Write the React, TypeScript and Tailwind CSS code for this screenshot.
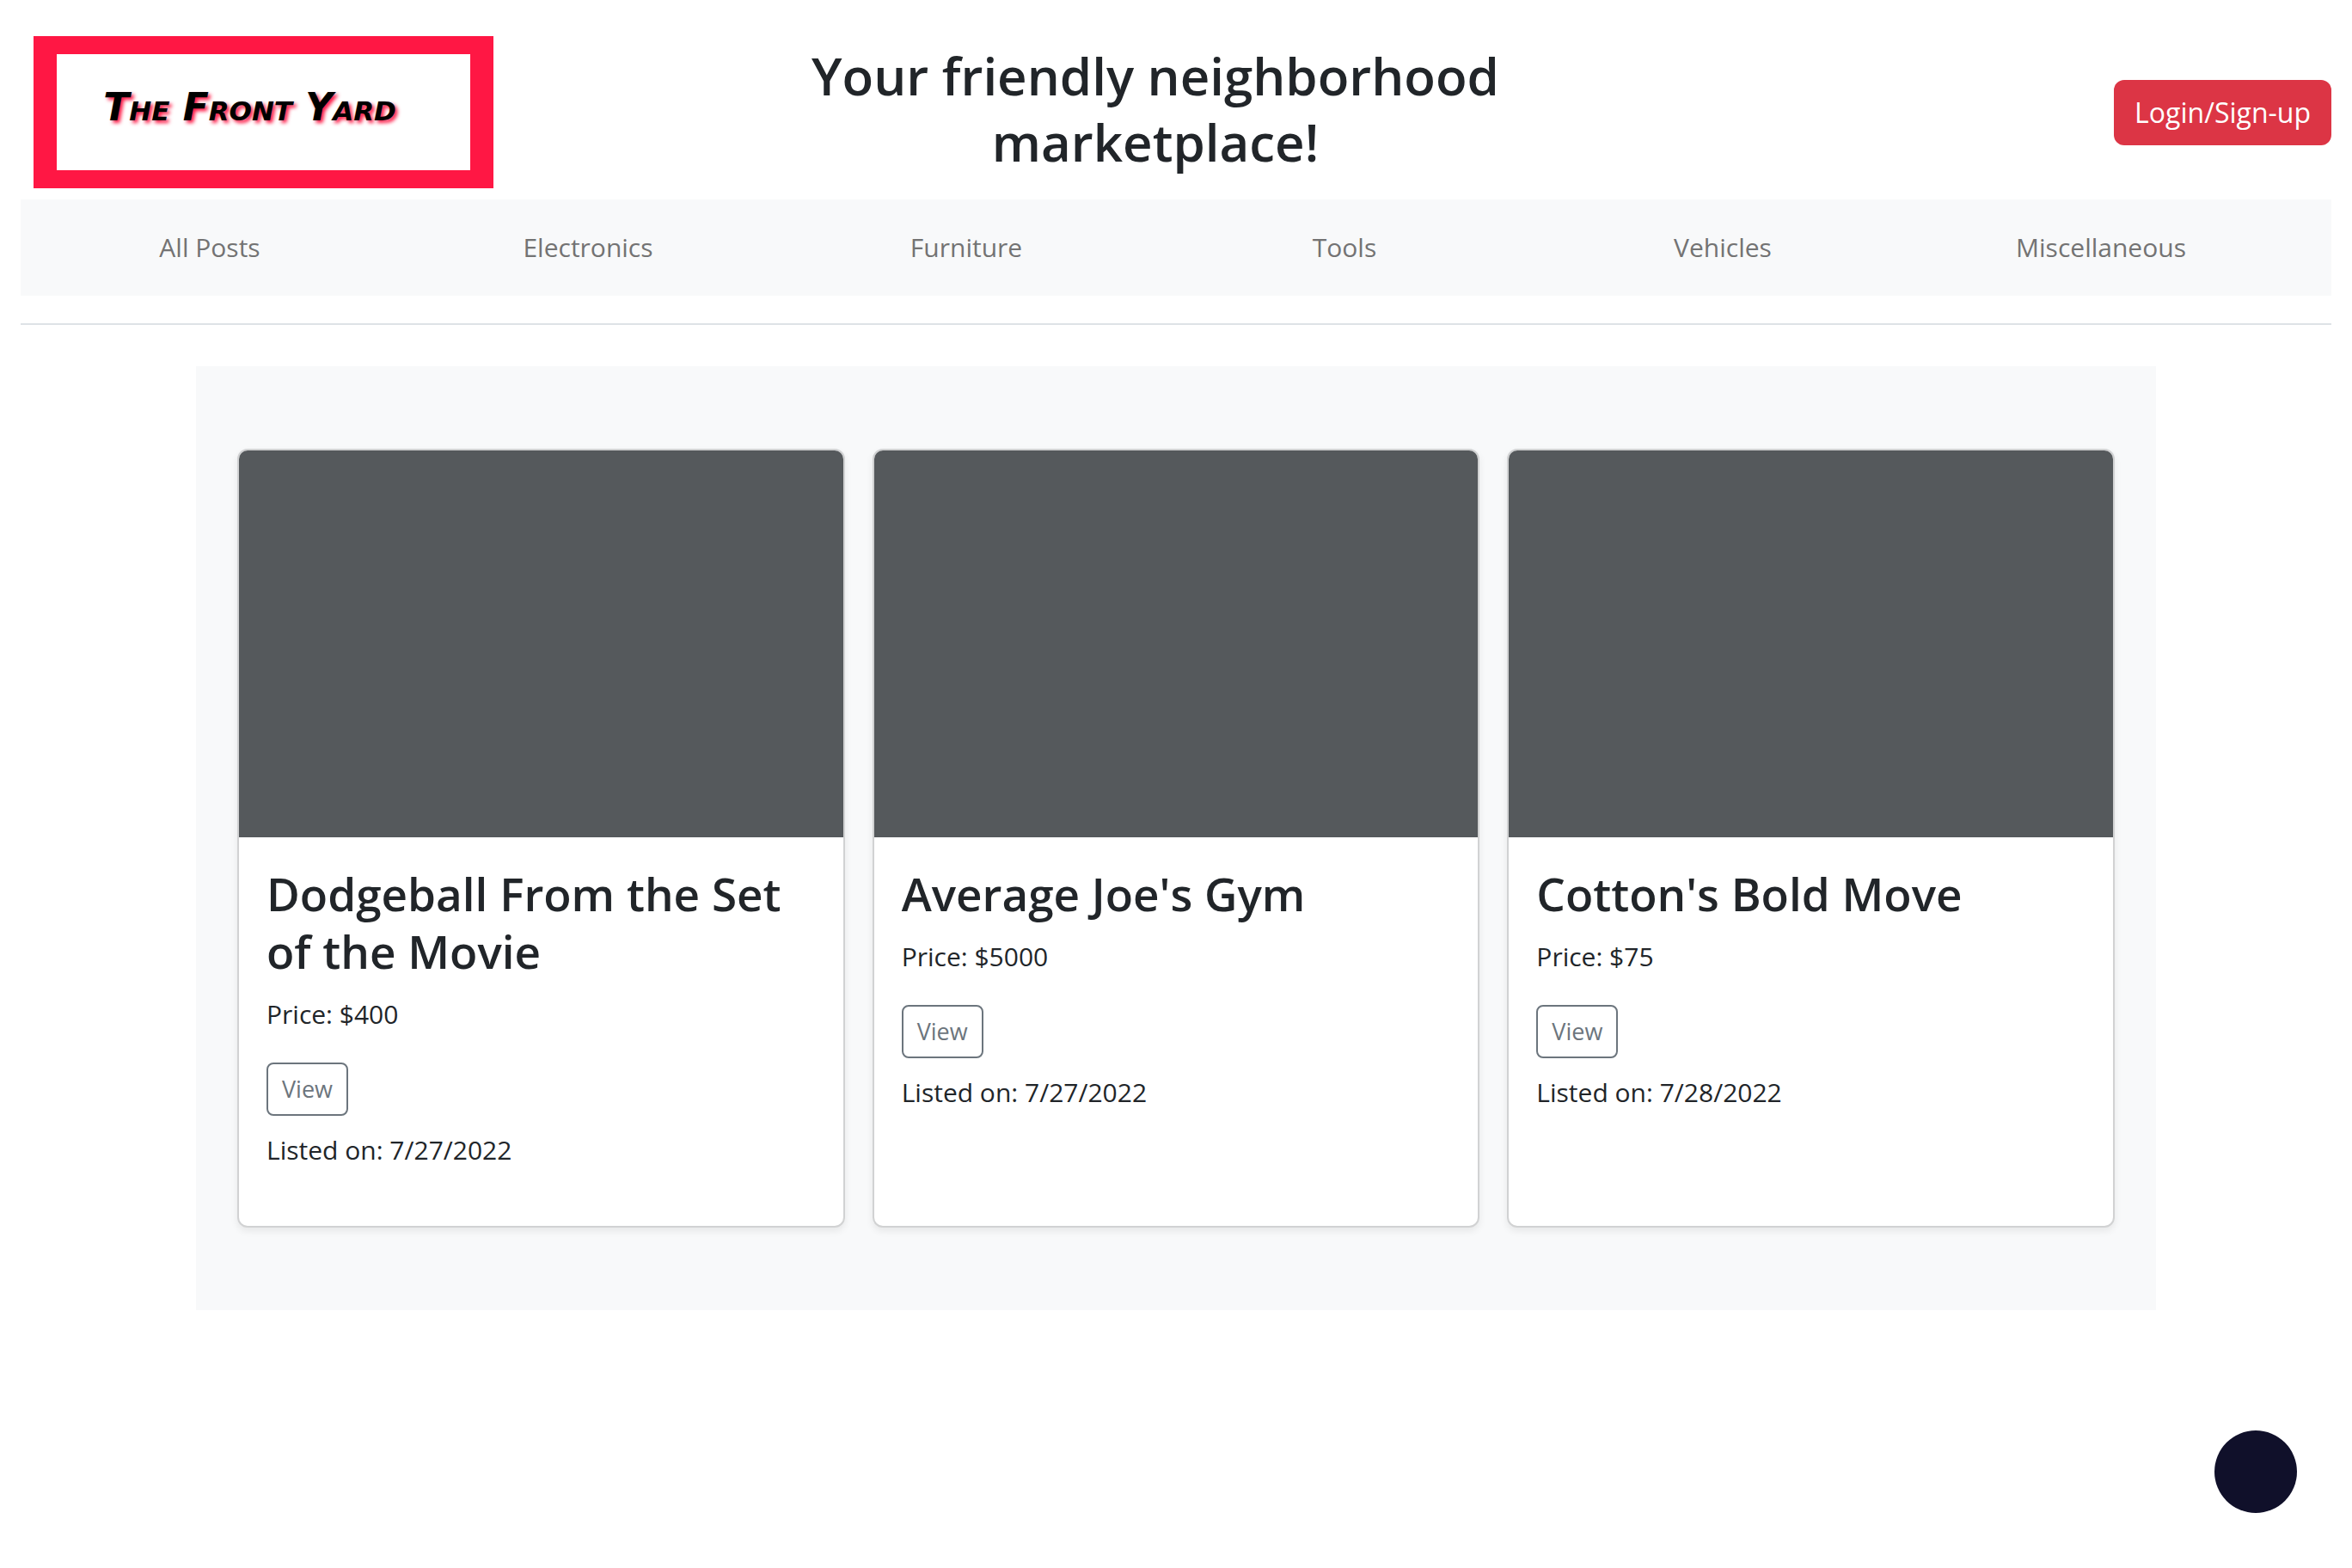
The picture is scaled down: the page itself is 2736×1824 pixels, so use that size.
const categories = ["All Posts", "Electronics", "Furniture", "Tools", "Vehicles", "Miscellaneous"];

const posts = [
  { title: "Dodgeball From the Set of the Movie", price: "$400", listed: "7/27/2022" },
  { title: "Average Joe's Gym", price: "$5000", listed: "7/27/2022" },
  { title: "Cotton's Bold Move", price: "$75", listed: "7/28/2022" },
];

function Logo() {
  return (
    <a
      href="#"
      className="ml-[15px] flex h-[177px] w-[535px] items-center justify-center border-x-[27px] border-y-[21px] border-[#ff1744] bg-white pr-8 pb-3"
    >
      <span className="font-['Rock_Salt','DejaVu_Sans',cursive] text-[44px] leading-none font-bold whitespace-nowrap text-black italic [font-variant-caps:small-caps] [text-shadow:3px_3px_4px_#ff1744]">
        The Front Yard
      </span>
    </a>
  );
}

function Header() {
  return (
    <header className="grid grid-cols-[109fr_112fr_115fr] items-center pt-[42px] pb-[13px]">
      <Logo />
      <h1 className="px-6 pb-2 text-center text-[60px] leading-[77px] font-semibold">
        Your friendly neighborhood marketplace!
      </h1>
      <button
        type="button"
        className="h-[76px] justify-self-end rounded-xl bg-[#dc3545] px-6 text-[32px] leading-[48px] text-white"
      >
        Login/Sign-up
      </button>
    </header>
  );
}

function PostCard({ title, price, listed }: (typeof posts)[number]) {
  return (
    <article className="flex flex-col rounded-xl border-2 border-[#d1d2d3] bg-white shadow-[0_4px_8px_rgba(0,0,0,0.075)]">
      <div className="h-[450px] rounded-t-[10px] bg-[#55595c]" />
      <div className="p-8 pb-16">
        <h2 className="mb-4 text-[53px] leading-[67px] font-semibold">{title}</h2>
        <p className="mb-8 text-[30px] leading-[48px]">Price: {price}</p>
        <button
          type="button"
          className="mb-4 block h-[62px] rounded-lg border-2 border-[#6c757d] px-4 text-[27px] leading-[42px] text-[#6c757d]"
        >
          View
        </button>
        <p className="text-[30px] leading-[48px]">Listed on: {listed}</p>
      </div>
    </article>
  );
}

export default function App() {
  return (
    <div className="min-h-screen bg-white px-6 font-['Segoe_UI','Open_Sans',sans-serif] text-[#212529]">
      <Header />
      <nav className="grid h-28 grid-cols-6 items-center bg-[#f8f9fa] pr-12">
        {categories.map((c) => (
          <a key={c} href="#" className="text-center text-[30px] leading-[48px] text-[#737373]">
            {c}
          </a>
        ))}
      </nav>
      <hr className="mt-8 border-t-2 border-[#dee2e6]" />
      <main className="mx-auto mt-12 max-w-[2280px] bg-[#f8f9fa] px-12 py-24">
        <div className="grid grid-cols-3 gap-8">
          {posts.map((p) => (
            <PostCard key={p.title} {...p} />
          ))}
        </div>
      </main>
      <button
        type="button"
        aria-label="Accessibility options"
        className="fixed right-16 bottom-16 size-24 rounded-full bg-[#10102a]"
      />
    </div>
  );
}
